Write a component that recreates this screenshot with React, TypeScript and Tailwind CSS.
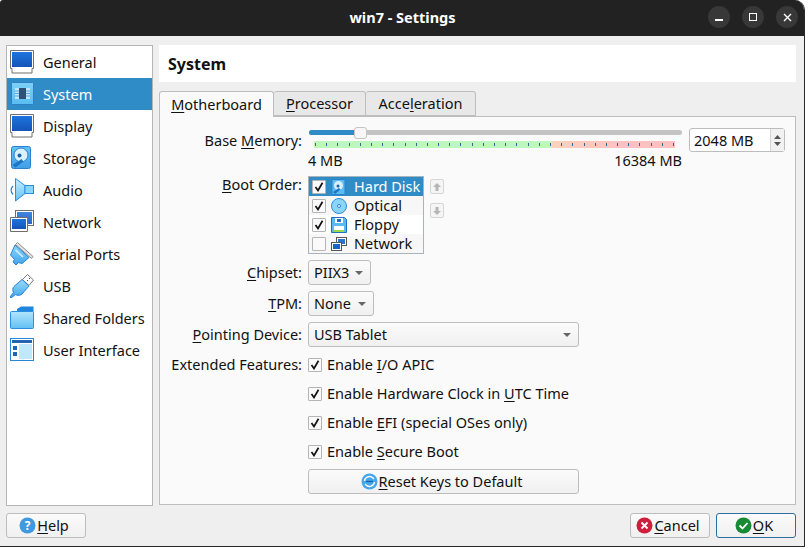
import type { ReactNode } from 'react'

const SANS = 'font-["Noto_Sans","Open_Sans",sans-serif]'

// Underlined mnemonic letter, Qt style
function U({ children }: { children: ReactNode }) {
  return <span className="underline decoration-1 underline-offset-2">{children}</span>
}

function Blue({ id, from = '#1d74dc', to = '#1554b8' }: { id: string; from?: string; to?: string }) {
  return (
    <defs>
      <linearGradient id={id} x1="0" y1="0" x2="0" y2="1">
        <stop offset="0" stopColor={from} />
        <stop offset="1" stopColor={to} />
      </linearGradient>
    </defs>
  )
}

function MonitorIcon({ id }: { id: string }) {
  return (
    <svg width="24" height="24" viewBox="0 0 24 24">
      <Blue id={id} />
      <path d="M.5.5h23v18h-1.5v4.500H2v-4.500H.5z" fill="#fff" stroke="#6e6e6e" />
      <rect x="2" y="2" width="20" height="15" fill={`url(#${id})`} />
    </svg>
  )
}

function SystemIcon() {
  return (
    <svg width="24" height="24" viewBox="0 0 24 24" className="ml-px">
      <Blue id="sys" from="#7ed0f8" to="#58bdf2" />
      <rect x=".5" y=".5" width="22" height="22" rx="1" fill="url(#sys)" stroke="#2f7fc4" />
      <rect x="4" y="6" width="15" height="11" fill="#bfe6f8" />
      <rect x="8" y="6" width="7" height="11" fill="#2e5277" />
      <path d="M4 9h4M4 11.500h4M4 14h4M15 9h4M15 11.500h4M15 14h4" stroke="#58a8dc" />
    </svg>
  )
}

function StorageIcon() {
  return (
    <svg width="24" height="24" viewBox="0 0 24 24" className="ml-px">
      <Blue id="sto" from="#62c4f5" to="#3f9fe8" />
      <rect x=".5" y=".5" width="19" height="22" rx="2" fill="url(#sto)" stroke="#2a7fd0" />
      <circle cx="10" cy="9" r="7" fill="#d9f1fc" stroke="#2a7fd0" />
      <circle cx="8.500" cy="9.500" r="2" fill="#1f5fa8" />
      <path d="M1.500 19l9-6 2 2.500-8 6z" fill="#1f74c4" />
    </svg>
  )
}

function AudioIcon() {
  return (
    <svg width="24" height="24" viewBox="0 0 24 24">
      <Blue id="aud" from="#c8effc" to="#62c0f5" />
      <path d="M3 8c-2.500 2.500-2.500 6 0 8.500" fill="none" stroke="#2a84d8" strokeWidth="1.200" />
      <path d="M5.500.5l9.500 7v8l-9.500 7.500z" fill="url(#aud)" stroke="#2a8fdc" />
      <rect x="15" y="7.500" width="8.500" height="8" fill="#8ad6fa" stroke="#2a8fdc" />
    </svg>
  )
}

function NetworkIcon() {
  return (
    <svg width="24" height="24" viewBox="0 0 24 24">
      <Blue id="net1" from="#3f86e0" to="#2a68c8" />
      <Blue id="net2" />
      <rect x="5.500" y=".5" width="18" height="15" fill="#fff" stroke="#6e6e6e" />
      <rect x="7" y="2" width="15" height="12" fill="url(#net1)" />
      <path d="M.5 7.500h17v14H.5z" fill="#fff" stroke="#6e6e6e" />
      <rect x="2" y="9" width="14" height="10" fill="url(#net2)" />
    </svg>
  )
}

function SerialIcon() {
  return (
    <svg width="24" height="24" viewBox="0 0 24 24">
      <Blue id="ser" from="#8fd8fa" to="#3fa4ec" />
      <path d="M7.500.5L23 14.500l-1.500 2L5.500 2.500z" fill="#e4e4e4" stroke="#8a8a8a" />
      <path d="M5 3l14 12.500-7 6-3.500-1L6 23l-3-3 1.500-2.500L.5 13z" fill="url(#ser)" stroke="#2a84d8" />
      <path d="M5.500 8l7.500 7" stroke="#d6effb" strokeWidth="1.500" />
    </svg>
  )
}

function UsbIcon() {
  return (
    <svg width="24" height="24" viewBox="0 0 24 24">
      <Blue id="usb" from="#9adcfa" to="#3fa4ec" />
      <path d="M17.500.5l6 5.500-4.500 5.500-6.500-6z" fill="#fff" stroke="#777" />
      <path d="M19 4l1 1M17 6l1 1" stroke="#555" />
      <path d="M12 5.500l7 6.500-7 8c-2.500 2-5 1.500-6.500.5L1 24 0 23l3.500-4.500c-1-2-1-4.500.5-6z" fill="url(#usb)" stroke="#2a84d8" />
    </svg>
  )
}

function FolderIcon() {
  return (
    <svg width="24" height="24" viewBox="0 0 24 24">
      <Blue id="fol" from="#b2e6fb" to="#62c0f5" />
      <path d="M7 3l4-2.500h12.500V8H7z" fill="#1f86dc" />
      <rect x=".5" y="5.500" width="23" height="17" rx="1" fill="url(#fol)" stroke="#2a8fe0" />
    </svg>
  )
}

function UiIcon() {
  return (
    <svg width="24" height="24" viewBox="0 0 24 24">
      <rect x=".5" y=".5" width="23" height="22" fill="#fff" stroke="#2a84d8" />
      <rect x="2" y="2" width="20" height="3" fill="#2464b0" />
      <rect x="9" y="6" width="13" height="15" fill="#bfe9fb" />
      <rect x="3" y="8" width="4" height="4" fill="#2464b0" />
      <rect x="3" y="14" width="4" height="4" fill="#2464b0" />
    </svg>
  )
}

const NAV_ITEMS = [
  { label: 'General', icon: <MonitorIcon id="mon1" /> },
  { label: 'System', icon: <SystemIcon />, active: true },
  { label: 'Display', icon: <MonitorIcon id="mon2" /> },
  { label: 'Storage', icon: <StorageIcon /> },
  { label: 'Audio', icon: <AudioIcon /> },
  { label: 'Network', icon: <NetworkIcon /> },
  { label: 'Serial Ports', icon: <SerialIcon /> },
  { label: 'USB', icon: <UsbIcon /> },
  { label: 'Shared Folders', icon: <FolderIcon /> },
  { label: 'User Interface', icon: <UiIcon /> },
]

function Check({ checked = true }: { checked?: boolean }) {
  return (
    <span className="flex h-[14px] w-[14px] shrink-0 items-center justify-center rounded-[1px] border border-[#b5b5b5] bg-[#fafafa]">
      {checked && (
        <svg width="10" height="10" viewBox="0 0 10 10">
          <path d="M1.500 5l2.500 3.500L8.500.8" fill="none" stroke="#111" strokeWidth="1.700" />
        </svg>
      )}
    </span>
  )
}

function Caret() {
  return (
    <svg width="8" height="4" viewBox="0 0 8 4" className="shrink-0">
      <path d="M0 0h8L4 4z" fill="#666" />
    </svg>
  )
}

function Combo({ width, children }: { width: string; children: ReactNode }) {
  return (
    <div className={`flex h-[25px] items-center justify-between rounded-[3px] border border-[#bdbdbd] bg-gradient-to-b from-[#fbfbfb] to-[#f0f0f0] pl-[5px] pr-[7px] ${width}`}>
      <span>{children}</span>
      <Caret />
    </div>
  )
}

function Row({ label, children }: { label: ReactNode; children: ReactNode }) {
  return (
    <div className="flex items-center">
      <div className="w-[141px] pr-[6px] text-right">{label}</div>
      {children}
    </div>
  )
}

function CheckRow({ children }: { children: ReactNode }) {
  return (
    <div className="flex h-[29px] items-center gap-[5px]">
      <Check />
      <span>{children}</span>
    </div>
  )
}

function Ticks() {
  const ticks = Array.from({ length: 33 })
  return (
    <div className="ml-[5px] flex h-[7px] w-[361px] justify-between bg-gradient-to-r from-[#bdf7bd] from-[66%] via-[#fdd2bb] via-[66%] to-[#ffc0c0] to-[85%] px-px">
      {ticks.map((_, i) => (
        <span key={i} className="mt-[2px] h-[3px] w-px bg-[#2b6a9a]" />
      ))}
    </div>
  )
}

function BootItem({ label, checked, selected, alt, icon }: { label: string; checked: boolean; selected?: boolean; alt?: boolean; icon: ReactNode }) {
  const tone = selected ? 'bg-[#308cc6] text-white' : alt ? 'bg-[#f7f7f7]' : 'bg-white'
  return (
    <div className={`flex h-[19px] items-center pl-[3px] ${tone}`}>
      <Check checked={checked} />
      <span className="ml-[5px] flex w-[16px] justify-center">{icon}</span>
      <span className="ml-[7px]">{label}</span>
    </div>
  )
}

function DiskGlyph() {
  return (
    <svg width="16" height="16" viewBox="0 0 16 16">
      <rect x="1" y="0.500" width="13" height="15" rx="1" fill="#5bbcf2" stroke="#2a7fd0" />
      <circle cx="7.500" cy="6.500" r="4.500" fill="#d6effb" />
      <circle cx="7" cy="7" r="1.500" fill="#1f5fa8" />
      <path d="M2 13l6-4 1.500 1.500L4 15z" fill="#1f74c4" />
    </svg>
  )
}

function DiscGlyph() {
  return (
    <svg width="16" height="16" viewBox="0 0 16 16">
      <circle cx="8" cy="8" r="7.500" fill="#8ad6fa" stroke="#2a8fdc" />
      <circle cx="8" cy="8" r="1.500" fill="#fff" stroke="#2a7fd0" />
    </svg>
  )
}

function FloppyGlyph() {
  return (
    <svg width="16" height="16" viewBox="0 0 16 16">
      <path d="M.5.5h13l2 2v13H.5z" fill="#5bb8f0" stroke="#1f6fc4" />
      <rect x="4" y="1" width="8" height="5" fill="#fff" />
      <rect x="6" y="2" width="4" height="3" fill="#1f6fc4" />
      <rect x="3" y="9" width="10" height="6" fill="#fff" />
      <rect x="3" y="13" width="10" height="2" fill="#9bd84a" />
    </svg>
  )
}

function NetGlyph() {
  return (
    <svg width="16" height="16" viewBox="0 0 16 16">
      <rect x="5.500" y="1.500" width="10" height="8" fill="#fff" stroke="#555" />
      <rect x="7" y="3" width="7" height="5" fill="#2f74cc" />
      <rect x="0.500" y="6.500" width="10" height="8" fill="#fff" stroke="#555" />
      <rect x="2" y="8" width="7" height="5" fill="#1a63cf" />
    </svg>
  )
}

function MoveButton({ up }: { up?: boolean }) {
  return (
    <div className="flex h-[15px] w-[14px] items-center justify-center rounded-[2px] border border-[#d5d5d5] bg-[#f5f5f5]">
      <svg width="8" height="8" viewBox="0 0 8 8">
        <path d={up ? 'M4 0L8 4H5.500v4h-3V4H0z' : 'M4 8L0 4h2.500V0h3v4H8z'} fill="#b5b5b5" />
      </svg>
    </div>
  )
}

function DialogButton({ width, primary, icon, children }: { width: string; primary?: boolean; icon: ReactNode; children: ReactNode }) {
  return (
    <div className={`flex h-[25px] items-center justify-center gap-px rounded-[3px] border bg-gradient-to-b from-[#fbfbfb] to-[#f0f0f0] pr-[4px] ${primary ? 'border-[#2d6f9e]' : 'border-[#bdbdbd]'} ${width}`}>
      {icon}
      <span>{children}</span>
    </div>
  )
}

function RoundIcon({ fill, children }: { fill: string; children: ReactNode }) {
  return (
    <svg width="17" height="17" viewBox="0 0 17 17" className="shrink-0">
      <circle cx="8.500" cy="8.500" r="8" fill={fill} />
      {children}
    </svg>
  )
}

function WinButton({ children }: { children: ReactNode }) {
  return <div className="flex h-[22px] w-[22px] items-center justify-center rounded-full bg-[#383838]">{children}</div>
}

export default function App() {
  return (
    <div className={`h-[549px] w-[808px] overflow-hidden bg-white text-[14.5px] leading-[19px] text-[#111] ${SANS}`}>
      <div className="flex h-[547px] w-[805px] flex-col overflow-hidden rounded-tl-[3px] rounded-tr-[10px] border-r border-b border-[#2a2a2a] bg-[#efefef]">
        <header className="flex h-[36px] shrink-0 items-center bg-[#222222] pb-[2px] pr-[6px] text-white">
          <div className="flex-1 pl-[97px] text-center text-[14.5px] font-bold">win7 - Settings</div>
          <div className="flex gap-[12px]">
            <WinButton><span className="mt-[6px] h-[2px] w-[8px] bg-white" /></WinButton>
            <WinButton><span className="h-[8px] w-[8px] border border-white" /></WinButton>
            <WinButton>
              <svg width="9" height="9" viewBox="0 0 9 9"><path d="M1 1l7 7M8 1L1 8" stroke="#fff" strokeWidth="1.400" /></svg>
            </WinButton>
          </div>
        </header>

        <div className="mt-[9px] flex h-[461px] shrink-0 gap-[6px] px-[6px]">
          <nav className="w-[147px] shrink-0 border border-[#b5b5b5] bg-white">
            {NAV_ITEMS.map((item) => (
              <div key={item.label} className={`flex h-[32px] items-center pl-[3px] ${item.active ? 'bg-[#308cc6] text-white' : ''}`}>
                <span className="flex w-[33px] shrink-0 justify-start">{item.icon}</span>
                <span>{item.label}</span>
              </div>
            ))}
          </nav>

          <main className="flex w-[637px] flex-col">
            <div className="flex h-[37px] items-center bg-white pl-[9px] pt-[2px] text-[16px] font-bold">System</div>
            <div className="mt-[8px] flex h-[26px] items-end">
              <div className="z-10 -mb-px flex h-[26px] w-[115px] items-center justify-center rounded-t-[3px] border border-b-0 border-[#bdbdbd] bg-[#fafafa]"><span><U>M</U>otherboard</span></div>
              <div className="flex h-[25px] w-[92px] items-center justify-center rounded-t-[3px] border border-l-0 border-[#bdbdbd] bg-[#e8e8e8]"><span><U>P</U>rocessor</span></div>
              <div className="flex h-[25px] w-[110px] items-center justify-center rounded-t-[3px] border border-l-0 border-[#bdbdbd] bg-[#e8e8e8]"><span>Acce<U>l</U>eration</span></div>
            </div>

            <section className="flex h-[389px] flex-col border border-[#bdbdbd] bg-[#fafafa] pl-[7px] pt-[11px]">
              <div className="flex items-start">
                <div className="w-[141px] pr-[6px] pt-[3px] text-right">Base <U>M</U>emory:</div>
                <div className="ml-px w-[373px]">
                  <div className="relative mt-[2px] h-[5px] rounded-full bg-[#c4c4c4]">
                    <div className="h-[5px] w-[50px] rounded-full bg-[#308cc6]" />
                    <div className="absolute -top-[3px] left-[45px] h-[12px] w-[13px] rounded-[3px] border border-[#c4c4c4] bg-[#f7f7f7]" />
                  </div>
                  <div className="mt-[6px]"><Ticks /></div>
                  <div className="-ml-px mt-[3px] flex justify-between">
                    <span>4 MB</span>
                    <span>16384 MB</span>
                  </div>
                </div>
                <div className="ml-[7px] flex h-[24px] w-[96px] items-center justify-between rounded-[3px] border border-[#bdbdbd] bg-white pl-[4px]">
                  <span>2048 MB</span>
                  <div className="flex h-full w-[14px] flex-col items-center justify-center gap-[3px] border-l border-[#d5d5d5] bg-[#f2f2f2]">
                    <svg width="7" height="4" viewBox="0 0 7 4"><path d="M0 4h7L3.500 0z" fill="#555" /></svg>
                    <svg width="7" height="4" viewBox="0 0 7 4"><path d="M0 0h7L3.500 4z" fill="#555" /></svg>
                  </div>
                </div>
              </div>

              <div className="mt-[6px] flex items-start">
                <div className="-mt-px w-[141px] pr-[6px] text-right"><U>B</U>oot Order:</div>
                <div className="w-[116px] border border-[#a9b3bb] bg-white">
                  <BootItem label="Hard Disk" checked selected icon={<DiskGlyph />} />
                  <BootItem label="Optical" checked alt icon={<DiscGlyph />} />
                  <BootItem label="Floppy" checked icon={<FloppyGlyph />} />
                  <BootItem label="Network" checked={false} alt icon={<NetGlyph />} />
                </div>
                <div className="ml-[6px] flex flex-col gap-[9px] pt-[3px]">
                  <MoveButton up />
                  <MoveButton />
                </div>
              </div>

              <div className="mt-[6px] flex flex-col gap-[6px]">
                <Row label={<><U>C</U>hipset:</>}><Combo width="w-[63px]">PIIX3</Combo></Row>
                <Row label={<><U>T</U>PM:</>}><Combo width="w-[66px]">None</Combo></Row>
                <Row label={<><U>P</U>ointing Device:</>}><Combo width="w-[271px]">USB Tablet</Combo></Row>
              </div>

              <div className="mt-[3px] flex">
                <div className="w-[141px] pr-[6px] pt-[5px] text-right">Extended Features:</div>
                <div className="w-[271px]">
                  <CheckRow>Enable <U>I</U>/O APIC</CheckRow>
                  <CheckRow>Enable Hardware Clock in <U>U</U>TC Time</CheckRow>
                  <CheckRow>Enable <U>E</U>FI (special OSes only)</CheckRow>
                  <CheckRow>Enable <U>S</U>ecure Boot</CheckRow>
                  <div className="mt-[3px]">
                    <DialogButton
                      width="w-full"
                      icon={
                        <RoundIcon fill="#45a8ea">
                          <path d="M3.500 8a5 5 0 0 1 8.500-3l1 1M13.500 9a5 5 0 0 1-8.500 3l-1-1" fill="none" stroke="#fff" strokeWidth="1.300" />
                          <path d="M5 8.500h7" stroke="#1a5fa8" strokeWidth="1.300" />
                        </RoundIcon>
                      }
                    >
                      <U>R</U>eset Keys to Default
                    </DialogButton>
                  </div>
                </div>
              </div>
            </section>
          </main>
        </div>

        <footer className="mt-[7px] flex justify-between pl-[6px] pr-[8px]">
          <DialogButton
            width="w-[80px]"
            icon={
              <RoundIcon fill="#3f9ae0">
                <text x="8.500" y="13" textAnchor="middle" fontSize="12" fill="#fff" fontWeight="700">?</text>
              </RoundIcon>
            }
          >
            <U>H</U>elp
          </DialogButton>
          <div className="flex gap-[6px]">
            <DialogButton
              width="w-[80px]"
              icon={
                <RoundIcon fill="#cf1f3c">
                  <path d="M5.500 5.500l6 6M11.500 5.500l-6 6" stroke="#fff" strokeWidth="1.800" />
                </RoundIcon>
              }
            >
              <U>C</U>ancel
            </DialogButton>
            <DialogButton
              primary
              width="w-[80px]"
              icon={
                <RoundIcon fill="#178a35">
                  <path d="M4.500 8.500l3 3 5-5.500" fill="none" stroke="#fff" strokeWidth="1.800" />
                </RoundIcon>
              }
            >
              <U>O</U>K
            </DialogButton>
          </div>
        </footer>
      </div>
    </div>
  )
}
